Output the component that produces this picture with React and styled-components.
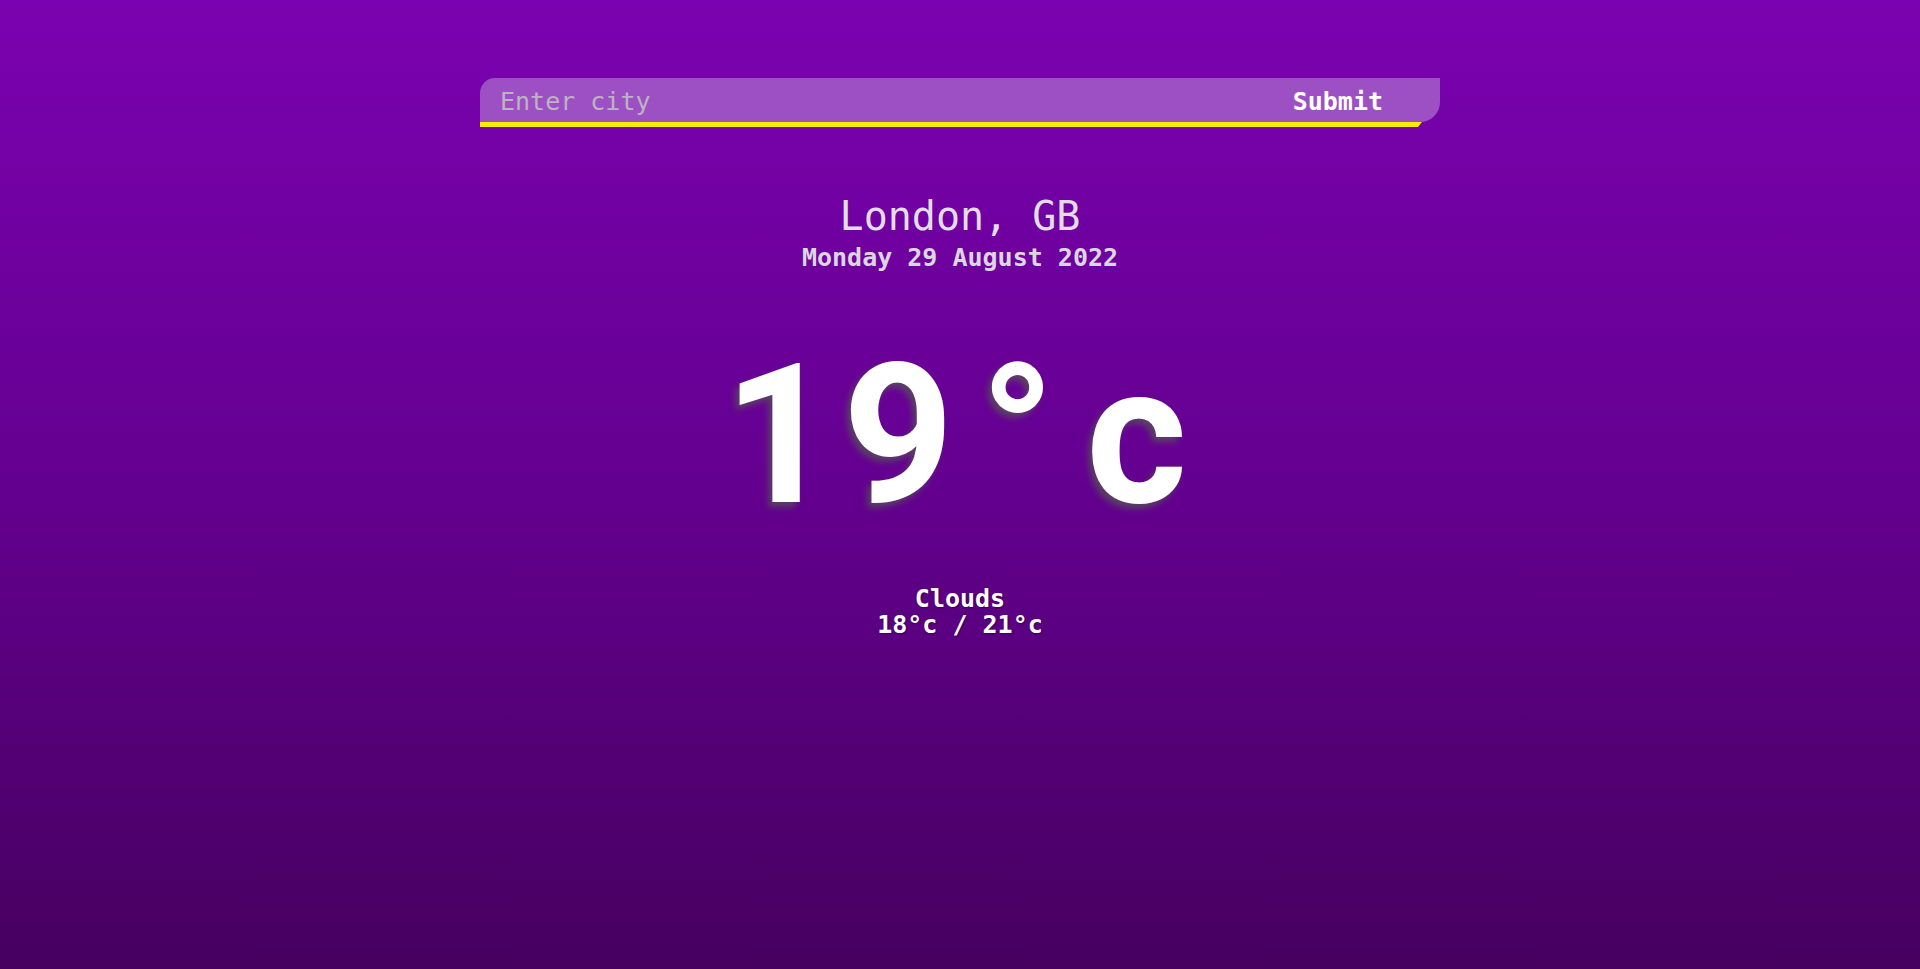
import React from 'react'
import styled, { createGlobalStyle } from 'styled-components'

const GlobalStyle = createGlobalStyle`
  html, body {
    margin: 0;
    padding: 0;
  }
  body {
    font-family: "DejaVu Sans Mono", "Liberation Mono", monospace;
  }
`

const Page = styled.div`
  min-height: 969px;
  background: linear-gradient(180deg, #7b02b0 0%, #640090 50%, #46005f 100%);
  display: flex;
  flex-direction: column;
  align-items: center;
  padding-top: 78px;
  box-sizing: border-box;
`

const SearchForm = styled.form`
  width: 960px;
  display: flex;
  flex-direction: column;
`

const Bar = styled.div`
  height: 44px;
  display: flex;
  align-items: center;
  background: #9d50c3;
  border-radius: 15px 0 20px 0;
`

const Underline = styled.div`
  width: 942px;
  height: 5px;
  background: #f4ef00;
  clip-path: polygon(0 0, 100% 0, calc(100% - 4px) 100%, 0 100%);
`

const CityInput = styled.input`
  flex: 1;
  height: 100%;
  border: none;
  outline: none;
  background: transparent;
  padding: 3px 0 0 20px;
  font-family: "DejaVu Sans Mono", monospace;
  font-size: 25px;
  color: #fff;
  &::placeholder {
    color: #bdb3c2;
  }
`

const SubmitButton = styled.button`
  border: none;
  background: transparent;
  color: #fff;
  font-family: "DejaVu Sans Mono", monospace;
  font-weight: bold;
  font-size: 25px;
  padding: 3px 57px 0 0;
  cursor: pointer;
`

const Location = styled.div`
  margin-top: 66px;
  text-align: center;
  color: #e2dde8;
`

const City = styled.div`
  font-size: 40px;
  line-height: 46px;
`

const DateLine = styled.div`
  margin-top: 5px;
  font-size: 25px;
  line-height: 28px;
  font-weight: bold;
  color: #dcd6e2;
`

const Temperature = styled.div`
  margin-top: 66px;
  margin-right: 4px;
  font-family: Roboto, "Liberation Sans", sans-serif;
  font-weight: 700;
  font-size: 194px;
  line-height: 196px;
  color: #fff;
  text-shadow: -4px 5px 6px rgba(85, 85, 85, 0.75);
  display: flex;
`

const Cell = styled.span`
  display: inline-block;
  width: 119px;
  text-align: center;
`

const Summary = styled.div`
  margin-top: 52px;
  text-align: center;
  color: #fff;
  font-size: 25px;
  line-height: 26px;
  font-weight: bold;
  text-shadow: 1px 1px 2px rgba(0, 0, 0, 0.4);
`

export default function App() {
  return (
    <>
      <GlobalStyle />
      <Page>
        <SearchForm onSubmit={e => e.preventDefault()}>
          <Bar>
            <CityInput placeholder="Enter city" />
            <SubmitButton type="submit">Submit</SubmitButton>
          </Bar>
          <Underline />
        </SearchForm>
        <Location>
          <City>London, GB</City>
          <DateLine>Monday 29 August 2022</DateLine>
        </Location>
        <Temperature>
          <Cell>1</Cell>
          <Cell>9</Cell>
          <Cell>°</Cell>
          <Cell>c</Cell>
        </Temperature>
        <Summary>
          <div>Clouds</div>
          <div>18°c / 21°c</div>
        </Summary>
      </Page>
    </>
  )
}
